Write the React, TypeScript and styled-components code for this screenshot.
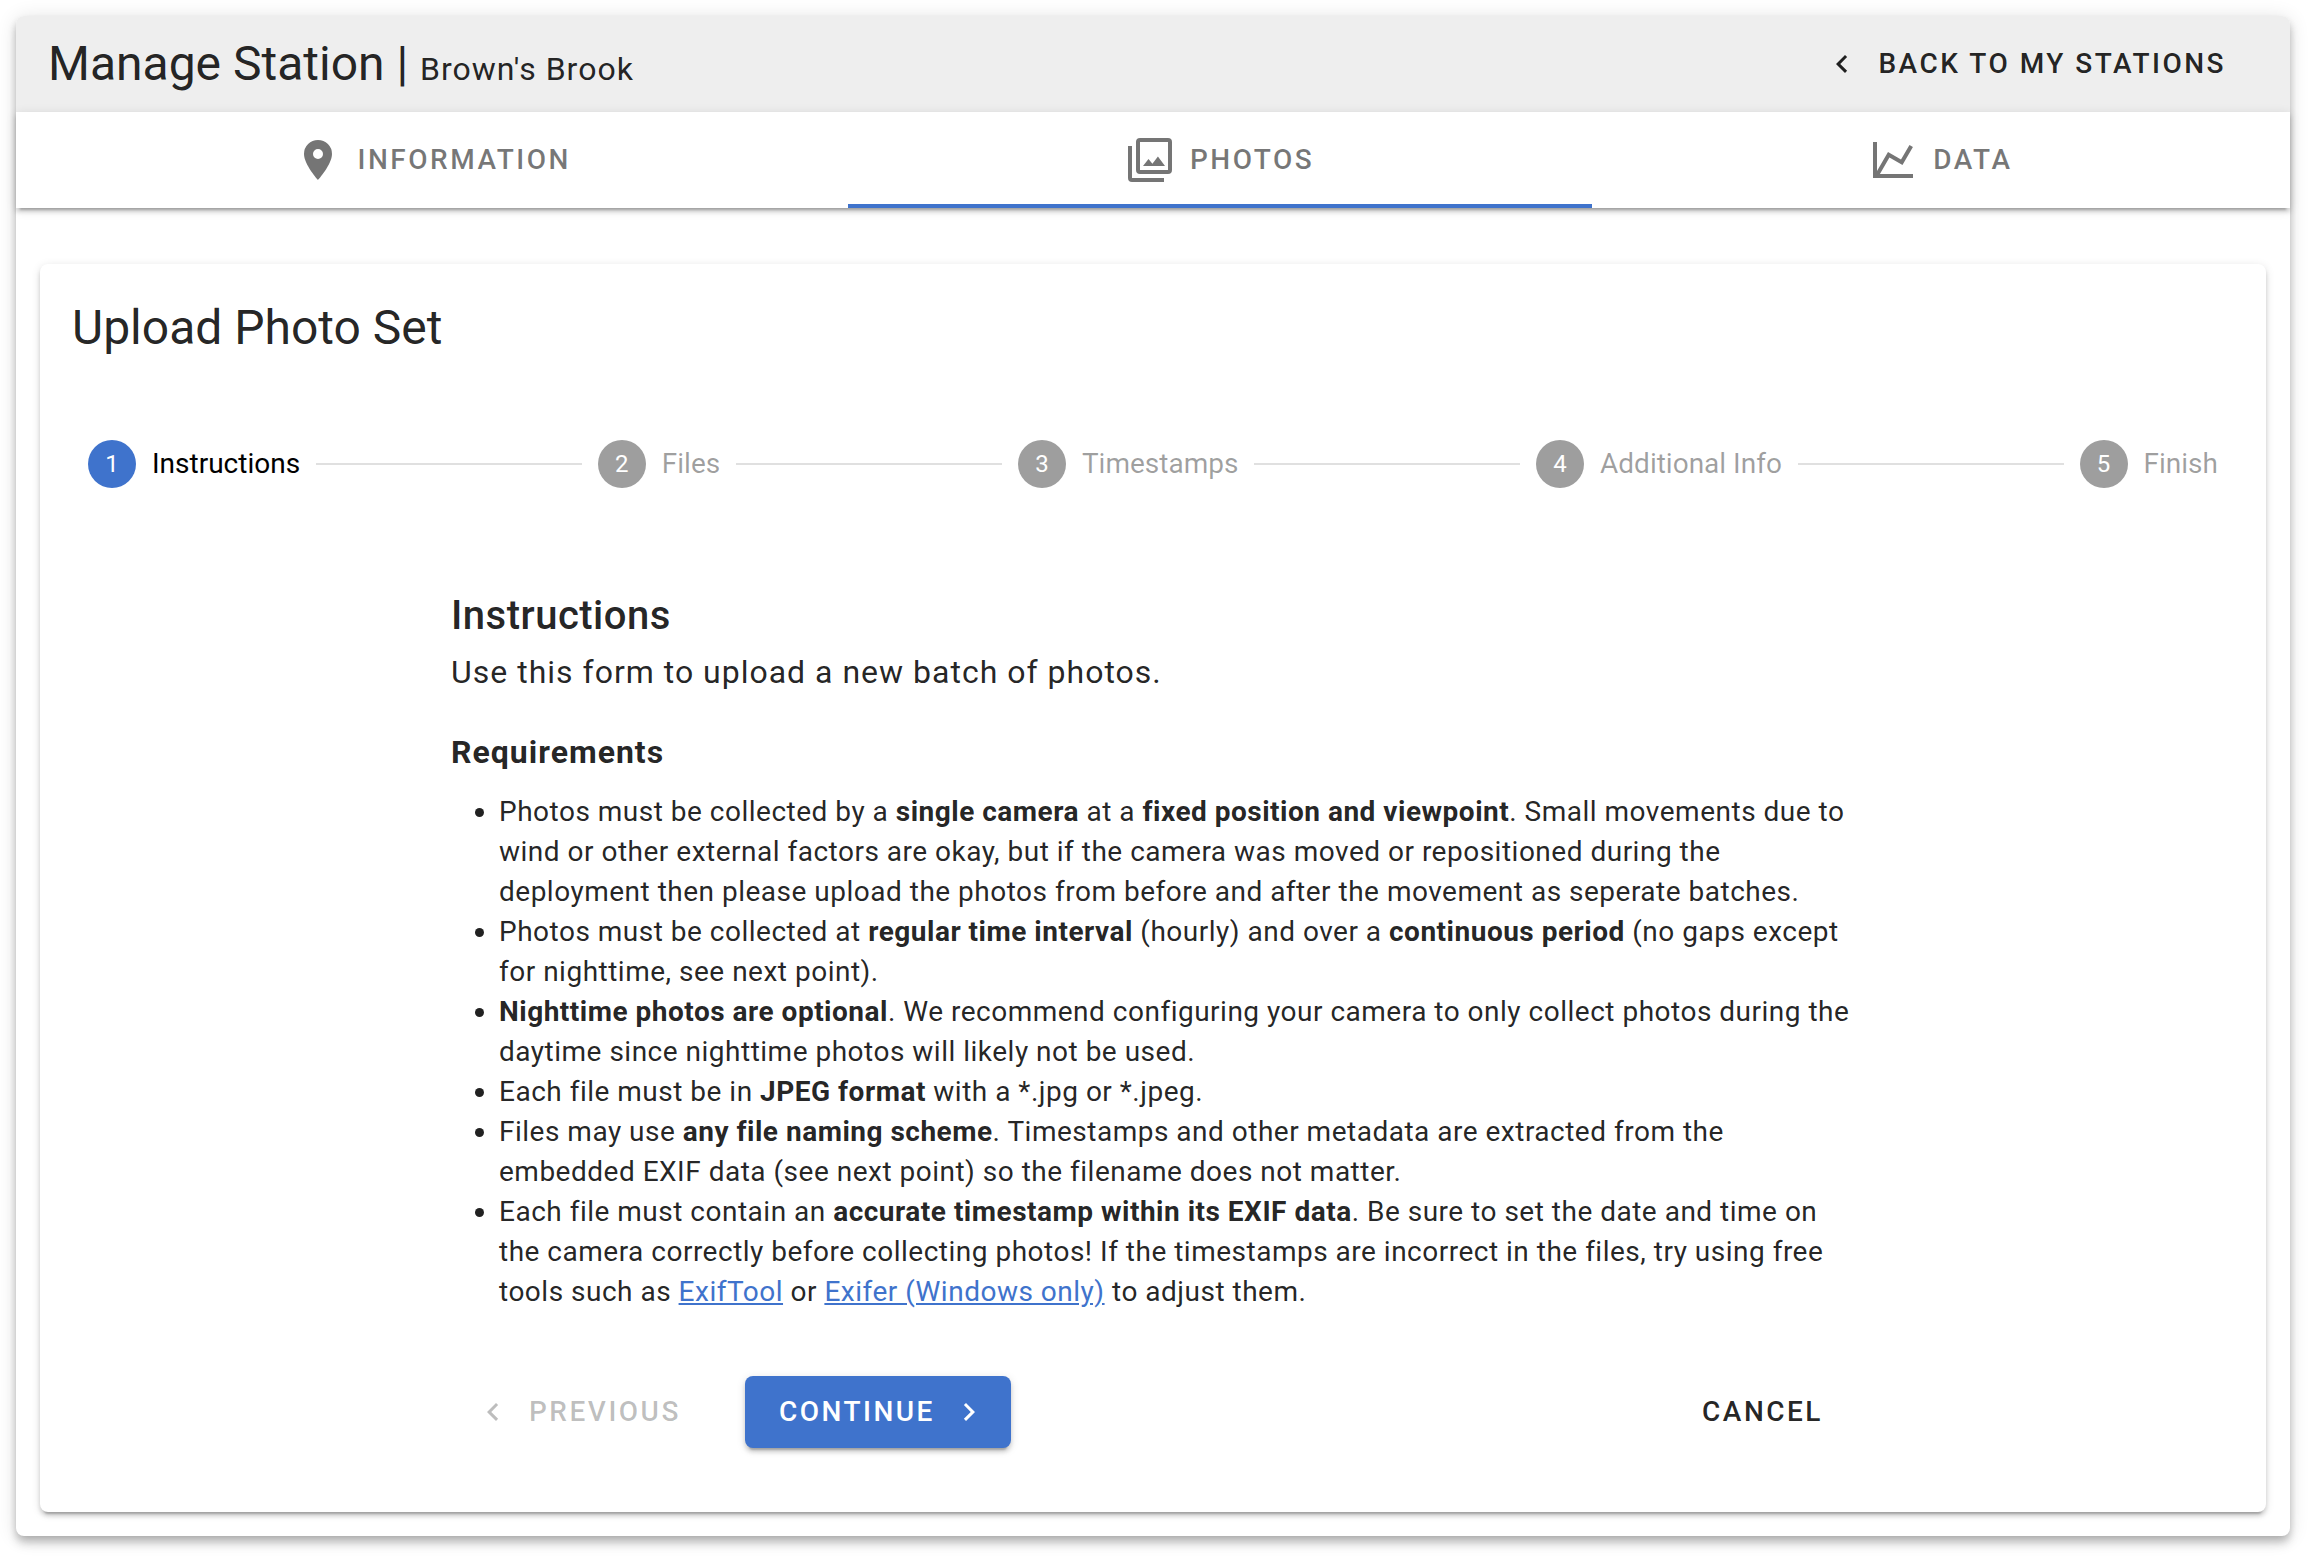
import React from "react";
import styled, { createGlobalStyle, css } from "styled-components";

const color = {
  primary: "#3f73cc",
  toolbar: "#eeeeee",
  text: "rgba(0, 0, 0, 0.87)",
  muted: "rgba(0, 0, 0, 0.54)",
  faint: "rgba(0, 0, 0, 0.38)",
  disabled: "rgba(0, 0, 0, 0.26)",
  rule: "rgba(0, 0, 0, 0.12)",
};

const elevation2 = css`
  box-shadow:
    0 6px 2px -4px rgba(0, 0, 0, 0.2),
    0 4px 4px 0 rgba(0, 0, 0, 0.14),
    0 2px 10px 0 rgba(0, 0, 0, 0.12);
`;

const elevation4 = css`
  box-shadow:
    0 4px 8px -2px rgba(0, 0, 0, 0.2),
    0 8px 10px 0 rgba(0, 0, 0, 0.14),
    0 2px 20px 0 rgba(0, 0, 0, 0.12);
`;

const GlobalStyle = createGlobalStyle`
  *, *::before, *::after { box-sizing: border-box; }
  body {
    margin: 0;
    background: #fff;
    color: ${color.text};
    font-family: Roboto, "Liberation Sans", sans-serif;
    font-size: 28px;
  }
  h1, h2, h3, p, ul, ol { margin: 0; padding: 0; }
`;

const Page = styled.main`
  padding: 16px 22px 22px 16px;
`;

const StationCard = styled.div`
  border-radius: 8px;
  background: #fff;
  ${elevation4}
`;

const Toolbar = styled.header`
  display: flex;
  align-items: center;
  justify-content: space-between;
  height: 96px;
  padding: 0 32px;
  border-radius: 8px 8px 0 0;
  background: ${color.toolbar};
`;

const ToolbarTitle = styled.h1`
  font-size: 48px;
  line-height: 64px;
  font-weight: 400;
`;

const StationName = styled.span`
  font-size: 32px;
  line-height: 32px;
  letter-spacing: 0.03125em;
`;

const buttonText = css`
  font-family: inherit;
  font-size: 28px;
  line-height: 40px;
  font-weight: 500;
  letter-spacing: 0.0892857em;
  text-transform: uppercase;
  white-space: nowrap;
`;

const buttonShape = css`
  ${buttonText}
  display: inline-flex;
  align-items: center;
  height: 72px;
  padding: 0 32px;
  border: 0;
  border-radius: 8px;
`;

const Button = styled.button<{ $primary?: boolean }>`
  ${buttonShape}
  padding: ${(p) => (p.$primary ? "0 34px" : "0 32px")};
  background: ${(p) => (p.$primary ? color.primary : "transparent")};
  color: ${(p) => (p.$primary ? "#fff" : color.text)};
  cursor: pointer;
  ${(p) => p.$primary && elevation2}

  &:disabled {
    color: ${color.disabled};
    cursor: default;
  }
`;

const LinkButton = styled.a`
  ${buttonShape}
  color: ${color.text};
  text-decoration: none;
`;

const ButtonIcon = styled.svg<{ $side: "left" | "right" }>`
  width: 36px;
  height: 36px;
  fill: currentColor;
  margin: ${(p) => (p.$side === "left" ? "0 18px 0 -8px" : "0 -10px 0 16px")};
`;

const Tabs = styled.div`
  display: flex;
  height: 96px;
  background: #fff;
  ${elevation2}
`;

const Tab = styled.button`
  ${buttonText}
  display: flex;
  flex: 1 1 auto;
  align-items: center;
  justify-content: center;
  gap: 16px;
  padding: 0 32px;
  border: 0;
  background: transparent;
  color: ${color.muted};
  cursor: pointer;

  &[aria-selected="true"] {
    box-shadow: inset 0 -4px 0 ${color.primary};
  }
`;

const TabIcon = styled.svg`
  width: 48px;
  height: 48px;
  fill: currentColor;
`;

const Body = styled.div`
  padding: 56px 24px 24px;
`;

const UploadCard = styled.section`
  border-radius: 8px;
  background: #fff;
  ${elevation2}
`;

const CardTitle = styled.h2`
  padding: 32px;
  font-size: 48px;
  line-height: 64px;
  font-weight: 400;
`;

const Stepper = styled.ol`
  display: flex;
  align-items: center;
  gap: 16px;
  height: 144px;
  padding: 0 48px;
  list-style: none;
`;

const StepItem = styled.li`
  display: contents;
`;

const StepBody = styled.div<{ $active: boolean }>`
  display: flex;
  flex: none;
  align-items: center;
  gap: 16px;
  line-height: 32px;
  color: ${(p) => (p.$active ? "#000" : color.faint)};
`;

const StepNumber = styled.span<{ $active: boolean }>`
  display: flex;
  align-items: center;
  justify-content: center;
  width: 48px;
  height: 48px;
  border-radius: 50%;
  background: ${(p) => (p.$active ? color.primary : "#9e9e9e")};
  color: #fff;
  font-size: 24px;
`;

const StepLine = styled.span`
  flex: 1;
  height: 2px;
  background: ${color.rule};
`;

const StepContent = styled.div`
  padding: 48px 24px 64px;
`;

const Column = styled.div`
  width: calc(100% * 8 / 12);
  margin: 0 auto;
  padding: 0 24px;
`;

const SectionTitle = styled.h3`
  font-size: 40px;
  line-height: 64px;
  font-weight: 500;
  letter-spacing: 0.0125em;
`;

const Lead = styled.p`
  font-size: 32px;
  line-height: 48px;
  letter-spacing: 0.03125em;
`;

const ListTitle = styled.p`
  margin-top: 32px;
  font-size: 32px;
  line-height: 48px;
  font-weight: 700;
  letter-spacing: 0.03125em;
`;

const Requirements = styled.ul`
  margin-top: 16px;
  padding-left: 48px;
  font-size: 28px;
  line-height: 40px;
  letter-spacing: 0.0178571em;

  a {
    color: ${color.primary};
  }
`;

const Actions = styled.div`
  display: flex;
  gap: 32px;
  margin-top: 64px;
`;

const Spacer = styled.div`
  flex: 1;
`;

const paths = {
  marker:
    "M12,11.5A2.5,2.5 0 0,1 9.5,9A2.5,2.5 0 0,1 12,6.5A2.5,2.5 0 0,1 14.5,9A2.5,2.5 0 0,1 12,11.5M12,2A7,7 0 0,0 5,9C5,14.25 12,22 12,22C12,22 19,14.25 19,9A7,7 0 0,0 12,2Z",
  photos:
    "M15.96,10.29L13.21,13.83L11.25,11.47L8.5,15H19.5L15.96,10.29M3,5H1V21A2,2 0 0,0 3,23H19V21H3M21,17H7V3H21M21,1H7A2,2 0 0,0 5,3V17A2,2 0 0,0 7,19H21A2,2 0 0,0 23,17V3A2,2 0 0,0 21,1Z",
  chart:
    "M16,11.78L20.24,4.45L21.97,5.45L16.74,14.5L10.23,10.75L5.46,19H22V21H2V3H4V17.54L9.5,8L16,11.78Z",
  left: "M15.41,16.58L10.83,12L15.41,7.41L14,6L8,12L14,18L15.41,16.58Z",
  right: "M8.59,16.58L13.17,12L8.59,7.41L10,6L16,12L10,18L8.59,16.58Z",
};

const tabs = [
  { label: "Information", icon: paths.marker },
  { label: "Photos", icon: paths.photos },
  { label: "Data", icon: paths.chart },
];

const steps = ["Instructions", "Files", "Timestamps", "Additional Info", "Finish"];

export default function App() {
  const [tab, setTab] = React.useState("Photos");

  return (
    <>
      <GlobalStyle />
      <Page>
        <StationCard>
          <Toolbar>
            <ToolbarTitle>
              Manage Station | <StationName>Brown's Brook</StationName>
            </ToolbarTitle>
            <LinkButton href="#stations">
              <ButtonIcon $side="left" viewBox="0 0 24 24" aria-hidden="true">
                <path d={paths.left} />
              </ButtonIcon>
              Back to my stations
            </LinkButton>
          </Toolbar>

          <Tabs role="tablist">
            {tabs.map((t) => (
              <Tab
                key={t.label}
                type="button"
                role="tab"
                aria-selected={tab === t.label}
                onClick={() => setTab(t.label)}
              >
                <TabIcon viewBox="0 0 24 24" aria-hidden="true">
                  <path d={t.icon} />
                </TabIcon>
                {t.label}
              </Tab>
            ))}
          </Tabs>

          <Body>
            <UploadCard>
              <CardTitle>Upload Photo Set</CardTitle>

              <Stepper>
                {steps.map((label, i) => (
                  <StepItem key={label} aria-current={i === 0 ? "step" : undefined}>
                    <StepBody $active={i === 0}>
                      <StepNumber $active={i === 0}>{i + 1}</StepNumber>
                      {label}
                    </StepBody>
                    {i < steps.length - 1 && <StepLine />}
                  </StepItem>
                ))}
              </Stepper>

              <StepContent>
                <Column>
                  <SectionTitle>Instructions</SectionTitle>
                  <Lead>Use this form to upload a new batch of photos.</Lead>
                  <ListTitle>Requirements</ListTitle>
                  <Requirements>
                    <li>
                      Photos must be collected by a <b>single camera</b> at a{" "}
                      <b>fixed position and viewpoint</b>. Small movements due to wind or
                      other external factors are okay, but if the camera was moved or
                      repositioned during the deployment then please upload the photos from
                      before and after the movement as seperate batches.
                    </li>
                    <li>
                      Photos must be collected at <b>regular time interval</b> (hourly) and
                      over a <b>continuous period</b> (no gaps except for nighttime, see next
                      point).
                    </li>
                    <li>
                      <b>Nighttime photos are optional</b>. We recommend configuring your
                      camera to only collect photos during the daytime since nighttime photos
                      will likely not be used.
                    </li>
                    <li>
                      Each file must be in <b>JPEG format</b> with a *.jpg or *.jpeg.
                    </li>
                    <li>
                      Files may use <b>any file naming scheme</b>. Timestamps and other
                      metadata are extracted from the embedded EXIF data (see next point) so
                      the filename does not matter.
                    </li>
                    <li>
                      Each file must contain an{" "}
                      <b>accurate timestamp within its EXIF data</b>. Be sure to set the date
                      and time on the camera correctly before collecting photos! If the
                      timestamps are incorrect in the files, try using free tools such as{" "}
                      <a href="#exiftool">ExifTool</a> or{" "}
                      <a href="#exifer">Exifer (Windows only)</a> to adjust them.
                    </li>
                  </Requirements>

                  <Actions>
                    <Button type="button" disabled>
                      <ButtonIcon $side="left" viewBox="0 0 24 24" aria-hidden="true">
                        <path d={paths.left} />
                      </ButtonIcon>
                      Previous
                    </Button>
                    <Button type="button" $primary>
                      Continue
                      <ButtonIcon $side="right" viewBox="0 0 24 24" aria-hidden="true">
                        <path d={paths.right} />
                      </ButtonIcon>
                    </Button>
                    <Spacer />
                    <Button type="button">Cancel</Button>
                  </Actions>
                </Column>
              </StepContent>
            </UploadCard>
          </Body>
        </StationCard>
      </Page>
    </>
  );
}
